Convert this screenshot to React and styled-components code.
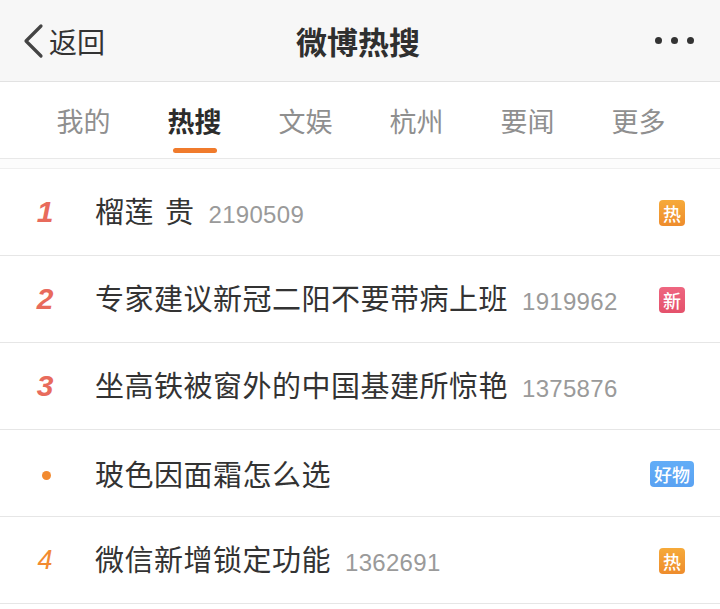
import React from "react";
import styled, { createGlobalStyle } from "styled-components";

const Global = createGlobalStyle`
  html, body { margin: 0; padding: 0; background: #ffffff; }
  body { font-family: "Noto Sans CJK SC", "Noto Sans", sans-serif; }
  * { box-sizing: border-box; }
`;

const Page = styled.div`
  width: 720px;
  min-height: 609px;
  background: #ffffff;
  overflow: hidden;
`;

const Header = styled.header`
  height: 82px;
  background: #f7f7f7;
  border-bottom: 1px solid #e2e2e2;
  display: grid;
  grid-template-columns: 1fr auto 1fr;
  align-items: center;
  padding: 0 26px 0 22px;
`;

const Back = styled.div`
  display: flex;
  align-items: center;
  gap: 5px;
  color: #333;
  font-size: 28px;
  line-height: 1;
  justify-self: start;
`;

const Title = styled.h1`
  margin: 0;
  font-size: 31px;
  font-weight: 700;
  color: #2f2f2f;
  line-height: 1;
`;

const Dots = styled.div`
  justify-self: end;
  display: flex;
  gap: 9px;
  padding-bottom: 1px;
`;

const Dot = styled.span`
  width: 7px;
  height: 7px;
  border-radius: 50%;
  background: #333;
`;

const Tabs = styled.nav`
  height: 77px;
  display: flex;
  padding-left: 28px;
  border-bottom: 1px solid #e8e8e8;
  background: #fff;
`;

const Tab = styled.div`
  width: 111px;
  display: flex;
  flex-direction: column;
  align-items: center;
  padding-top: 25px;
`;

const TabLabel = styled.span`
  font-size: 27px;
  line-height: 28px;
  color: ${(p) => (p.$active ? "#2c2c2c" : "#8f8f8f")};
  font-weight: ${(p) => (p.$active ? 700 : 400)};
`;

const TabBar = styled.span`
  margin-top: 13px;
  width: 44px;
  height: 5px;
  border-radius: 3px;
  background: ${(p) => (p.$active ? "#f07b2c" : "transparent")};
`;

const Spacer = styled.div`
  height: 10px;
  background: #fcfcfc;
  border-bottom: 1px solid #efefef;
`;

const List = styled.ul`
  list-style: none;
  margin: 0;
  padding: 0;
`;

const Row = styled.li`
  height: 87px;
  border-bottom: 1px solid #e6e6e6;
  display: grid;
  grid-template-columns: 92px 1fr 50px;
  column-gap: 3px;
  align-items: center;
  padding-right: 23px;
`;

const Rank = styled.span`
  text-align: center;
  font-family: "Liberation Sans", Arial, sans-serif;
  font-style: italic;
  font-weight: ${(p) => (p.$top ? 700 : 400)};
  font-size: ${(p) => (p.$top ? "30px" : "27px")};
  color: ${(p) => (p.$top ? "#e86b5c" : "#f28a30")};
  line-height: 1;
  padding-right: 2px;
`;

const PromoDot = styled.span`
  justify-self: center;
  width: 9px;
  height: 9px;
  border-radius: 50%;
  background: #f28a30;
  margin-left: 1px;
  margin-top: 4px;
`;

const Topic = styled.div`
  display: flex;
  align-items: baseline;
  gap: 14px;
  white-space: nowrap;
  margin-top: 1px;
`;

const TopicText = styled.span`
  font-size: 29px;
  letter-spacing: 0.5px;
  color: #333;
  line-height: 1;
  word-spacing: 4px;
`;

const Count = styled.span`
  font-family: "Liberation Sans", Arial, sans-serif;
  font-size: 24px;
  letter-spacing: 0.3px;
  color: #9a9a9a;
`;

const badgeColors = {
  hot: "linear-gradient(180deg, #f6aa3a, #ee8c2c)",
  new: "linear-gradient(180deg, #ee6680, #e4516b)",
  good: "linear-gradient(180deg, #62adf7, #5aa2f2)",
};

const Badge = styled.span`
  justify-self: center;
  height: 26px;
  min-width: 26px;
  padding: 0 ${(p) => (p.$wide ? "4px" : "0")};
  border-radius: 4px;
  background: ${(p) => badgeColors[p.$type]};
  color: #fff;
  font-size: 18px;
  font-weight: 500;
  line-height: 26px;
  text-align: center;
  margin-top: 2px;
`;

const tabs = ["我的", "热搜", "文娱", "杭州", "要闻", "更多"];

const rows = [
  { rank: "1", top: true, text: "榴莲 贵", count: "2190509", badge: { type: "hot", label: "热" } },
  { rank: "2", top: true, text: "专家建议新冠二阳不要带病上班", count: "1919962", badge: { type: "new", label: "新" } },
  { rank: "3", top: true, text: "坐高铁被窗外的中国基建所惊艳", count: "1375876" },
  { dot: true, text: "玻色因面霜怎么选", badge: { type: "good", label: "好物", wide: true } },
  { rank: "4", top: false, text: "微信新增锁定功能", count: "1362691", badge: { type: "hot", label: "热" } },
];

export default function App() {
  return (
    <Page>
      <Global />
      <Header>
        <Back>
          <svg width="22" height="36" viewBox="0 0 22 36">
            <path d="M19 3 L4 18 L19 33" fill="none" stroke="#444" strokeWidth="3.2" strokeLinecap="round" strokeLinejoin="round" />
          </svg>
          <span>返回</span>
        </Back>
        <Title>微博热搜</Title>
        <Dots>
          <Dot />
          <Dot />
          <Dot />
        </Dots>
      </Header>
      <Tabs>
        {tabs.map((t) => (
          <Tab key={t}>
            <TabLabel $active={t === "热搜"}>{t}</TabLabel>
            <TabBar $active={t === "热搜"} />
          </Tab>
        ))}
      </Tabs>
      <Spacer />
      <List>
        {rows.map((r, i) => (
          <Row key={i}>
            {r.dot ? <PromoDot /> : <Rank $top={r.top}>{r.rank}</Rank>}
            <Topic>
              <TopicText>{r.text}</TopicText>
              {r.count && <Count>{r.count}</Count>}
            </Topic>
            {r.badge ? (
              <Badge $type={r.badge.type} $wide={r.badge.wide}>{r.badge.label}</Badge>
            ) : (
              <span />
            )}
          </Row>
        ))}
      </List>
    </Page>
  );
}
